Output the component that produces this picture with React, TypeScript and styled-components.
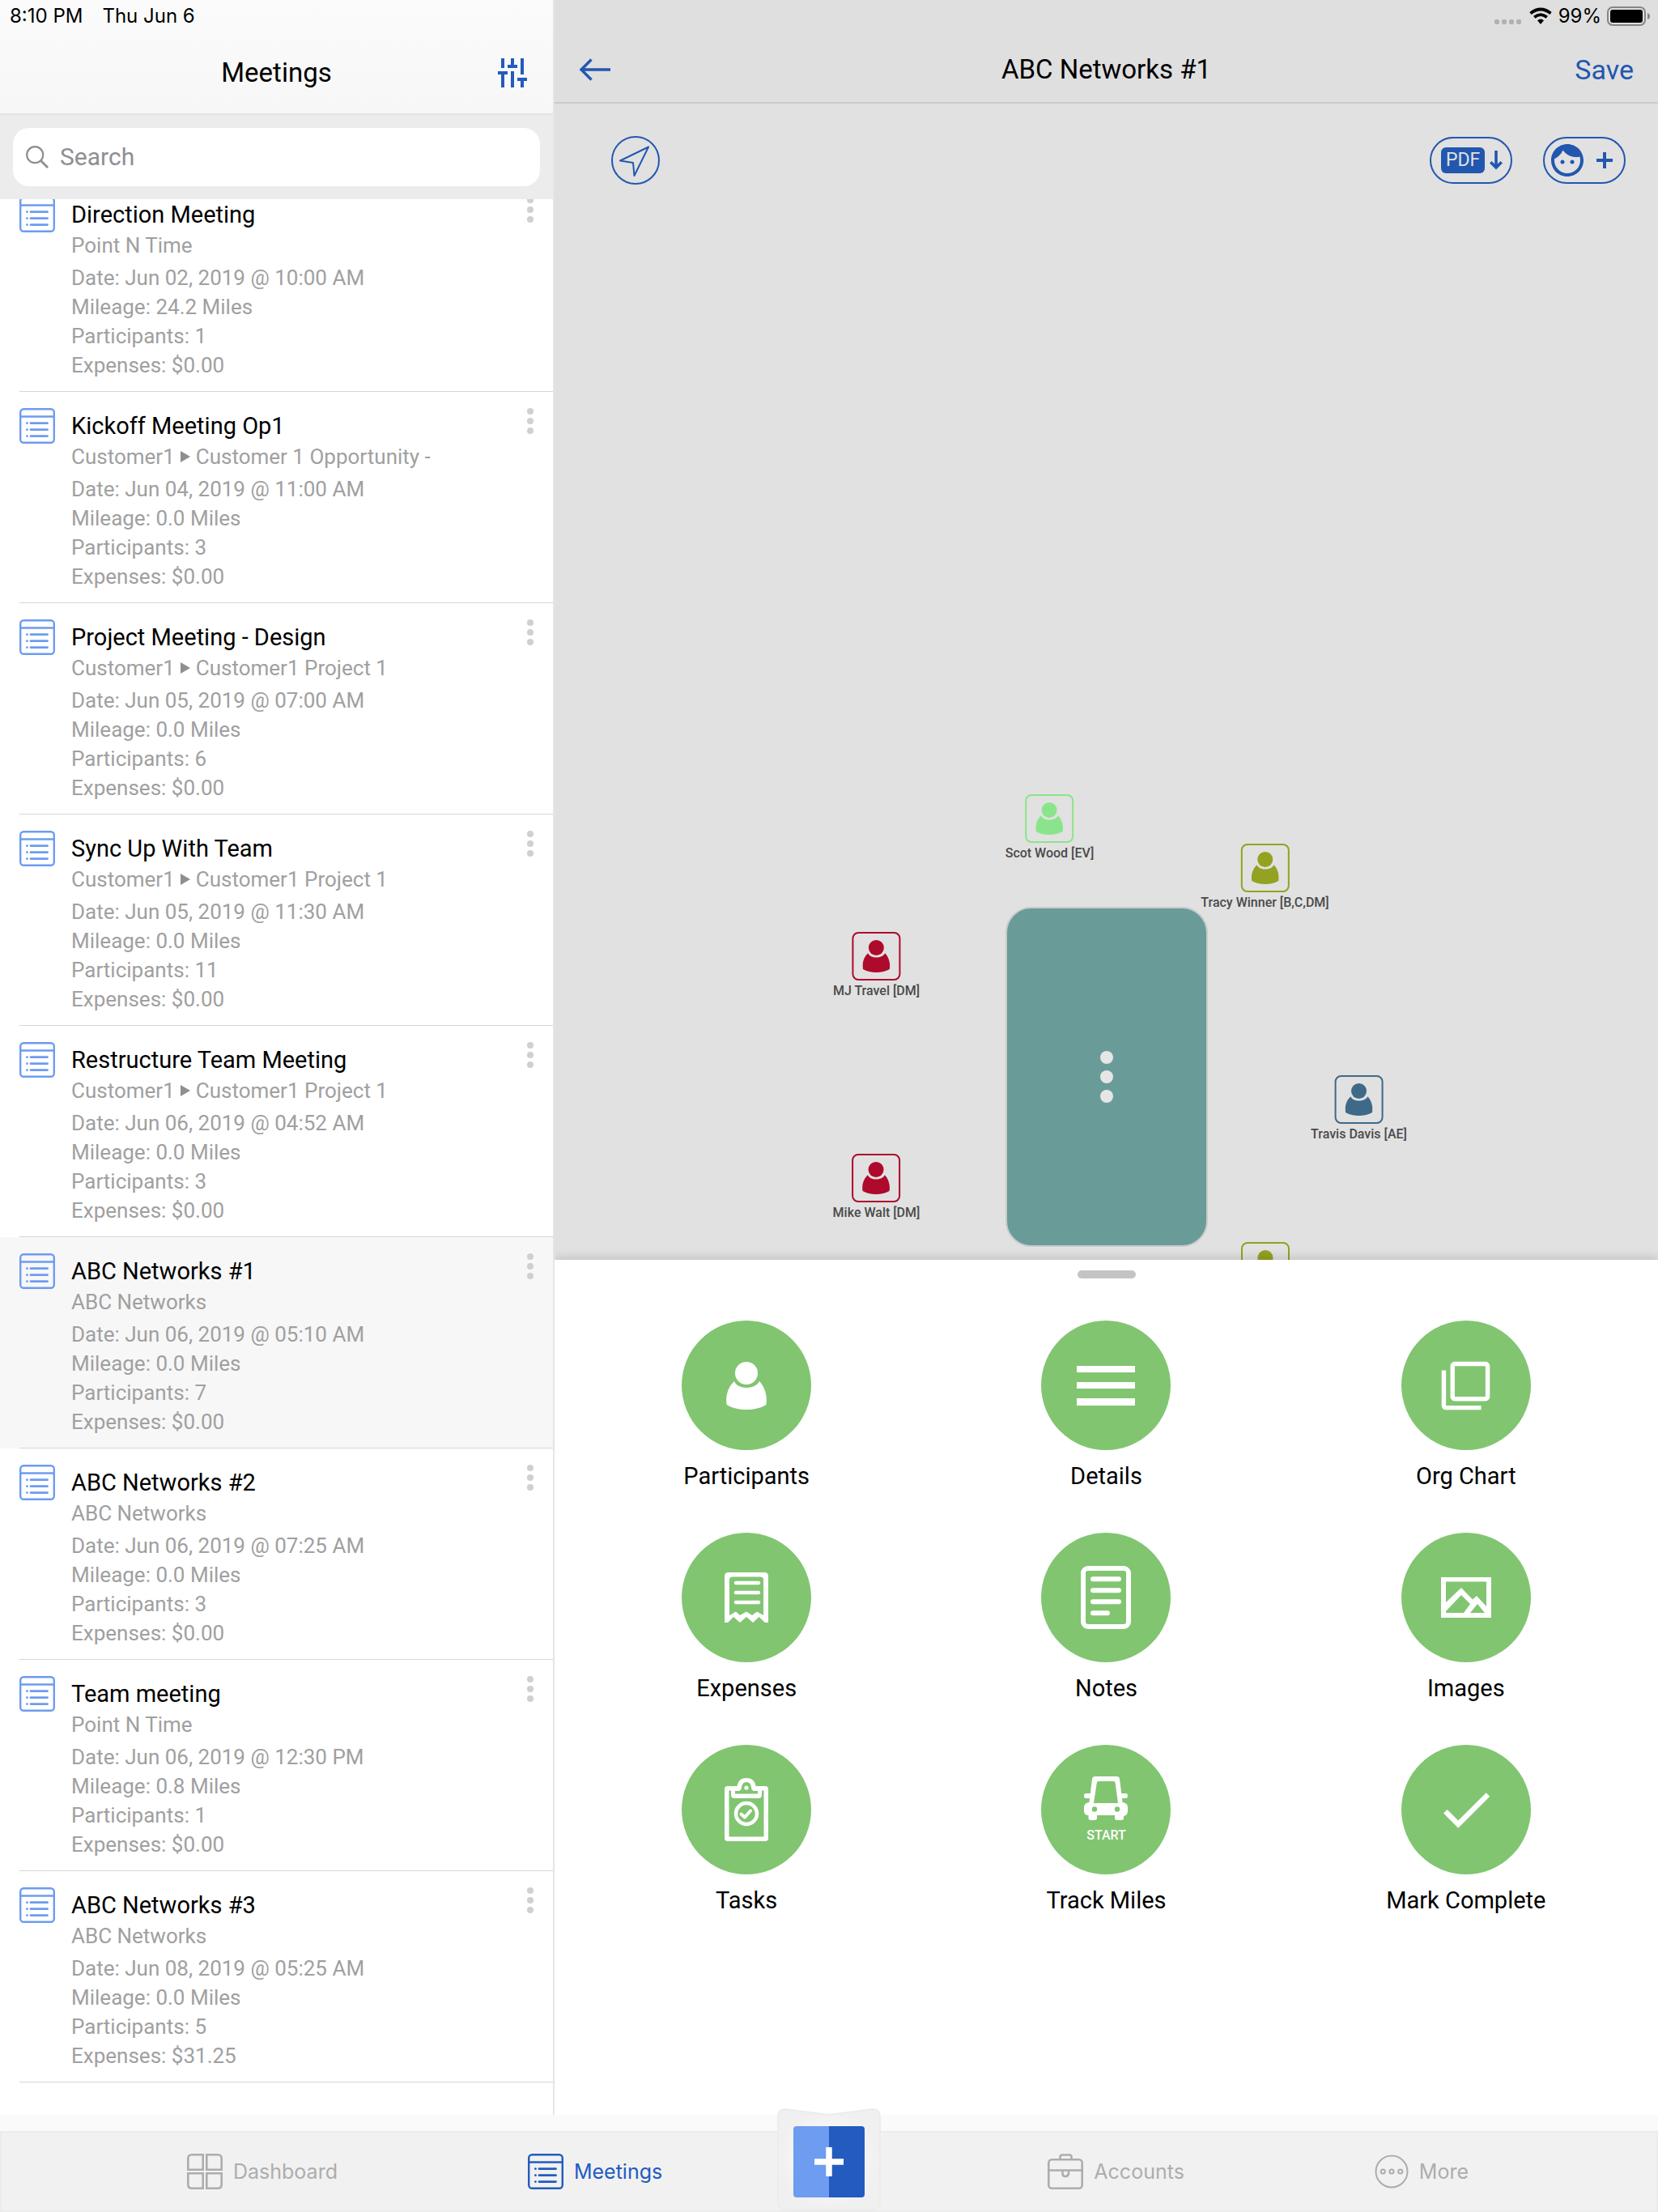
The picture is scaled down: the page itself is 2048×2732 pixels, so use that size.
import React, { useLayoutEffect, useRef } from 'react';
import styled, { createGlobalStyle } from 'styled-components';
import { MdCheck, MdFace, MdFilterNone } from 'react-icons/md';

const color = {
  blue: '#2257b0',
  brand: '#235bbf',
  sky: '#6d9cf0',
  green: '#81c571',
  muted: '#a0a0a0',
  tab: '#adadad',
  canvas: '#e1e1e1',
};

const GlobalStyle = createGlobalStyle`
  *, *::before, *::after { box-sizing: border-box; }
  body { margin: 0; font-family: Roboto, "Liberation Sans", sans-serif; color: #000; background: #fff; }
  button { border: 0; padding: 0; background: none; font: inherit; color: inherit; cursor: pointer; }
  h1, h2, h3, p, ul { margin: 0; padding: 0; font-weight: 400; }
  ul { list-style: none; }
  svg { display: block; flex: none; }
`;

const App = styled.div`
  display: flex;
  flex-direction: column;
  height: 100vh;
`;

const Panes = styled.div`
  flex: 1;
  min-height: 0;
  display: grid;
  grid-template-columns: minmax(0, 685fr) minmax(0, 1363fr);
  grid-template-rows: minmax(0, 1fr);
`;

const ListPane = styled.aside`
  display: flex;
  flex-direction: column;
  border-right: 2px solid #e5e5e5;
`;

const DetailPane = styled.main`
  display: flex;
  flex-direction: column;
  overflow: hidden;
  background: ${color.canvas};
`;

const ListHeader = styled.header`
  background: linear-gradient(#fbfbfb, #f7f7f7);
  border-bottom: 2px solid #e4e4e4;
`;

const DetailHeader = styled.header`
  background: #dfdfdf;
  border-bottom: 2px solid #cbcbcb;
`;

const StatusBar = styled.div<{ $end?: boolean }>`
  display: flex;
  align-items: center;
  justify-content: ${p => (p.$end ? 'flex-end' : 'flex-start')};
  gap: ${p => (p.$end ? 7 : 24)}px;
  height: 40px;
  padding: 0 10px 0 12px;
  font: 400 24px/28px Inter, Roboto, sans-serif;
`;

const TitleRow = styled.div<{ $height: number; $side: number; $top?: number }>`
  display: grid;
  grid-template-columns: 1fr auto 1fr;
  align-items: center;
  height: ${p => p.$height}px;
  padding: ${p => p.$top || 0}px ${p => p.$side}px 0;
  > :last-child { justify-self: end; }
`;

const Title = styled.h1`
  grid-column: 2;
  font-size: 33px;
  line-height: 40px;
`;

const BarButton = styled.button`
  justify-self: start;
  color: ${color.blue};
  font-size: 34px;
  line-height: 40px;
`;

const SearchBar = styled.div`
  padding: 16px;
  background: #ececec;
`;

const SearchField = styled.label`
  display: flex;
  align-items: center;
  gap: 14px;
  height: 72px;
  padding: 0 16px;
  border-radius: 20px;
  background: #fff;
  color: #8e8e93;
`;

const SearchInput = styled.input`
  flex: 1;
  min-width: 0;
  border: 0;
  outline: 0;
  padding: 0;
  background: none;
  font: 400 30px/36px Roboto, sans-serif;
  &::placeholder { color: #8e8e93; opacity: 1; }
`;

const MeetingList = styled.ul`
  flex: 1;
  min-height: 0;
  overflow-y: auto;
  scrollbar-width: none;
  padding-bottom: 64px;
`;

const MeetingRow = styled.li<{ $selected?: boolean }>`
  padding-left: 24px;
  background: ${p => (p.$selected ? '#f7f7f7' : '#fff')};
`;

const RowBody = styled.article`
  display: flex;
  align-items: flex-start;
  gap: 20px;
  padding: 20px 24px 14px 0;
  border-bottom: 1px solid #d6d6d6;
  color: ${color.sky};
`;

const RowText = styled.div`
  flex: 1;
  min-width: 0;
  color: ${color.muted};
  font-size: 26px;
  line-height: 36px;
`;

const RowTitle = styled.h2`
  padding-top: 2px;
  color: #000;
  font-size: 29px;
  line-height: 40px;
`;

const RowPath = styled.p`
  display: flex;
  align-items: center;
  gap: 7px;
  margin-bottom: 4px;
`;

const Arrow = styled.span`
  border-left: 12px solid #8f8f8f;
  border-top: 7px solid transparent;
  border-bottom: 7px solid transparent;
`;

const Dots = styled.button<{ $size: number; $gap: number; $color: string }>`
  display: flex;
  flex-direction: column;
  gap: ${p => p.$gap}px;
  color: ${p => p.$color};
  span {
    width: ${p => p.$size}px;
    height: ${p => p.$size}px;
    border-radius: 50%;
    background: currentColor;
  }
`;

const Canvas = styled.section`
  position: relative;
  flex: 1;
  min-height: 0;
  overflow: hidden;
`;

const CanvasTools = styled.div`
  display: flex;
  align-items: center;
  gap: 38px;
  padding: 40px 40px 0 70px;
  color: ${color.blue};
`;

const RoundButton = styled.button`
  display: grid;
  place-items: center;
  width: 60px;
  height: 60px;
  margin-right: auto;
  border: 2px solid;
  border-radius: 50%;
`;

const PillButton = styled.button`
  display: flex;
  align-items: center;
  justify-content: space-between;
  width: 102px;
  height: 58px;
  padding: 0 10px 0 12px;
  border: 2px solid;
  border-radius: 30px;
`;

const FacePill = styled(PillButton)`
  padding: 0 14px 0 4px;
`;

const PdfBadge = styled.span`
  padding: 0 6px;
  border-radius: 6px;
  background: ${color.blue};
  color: ${color.canvas};
  font-size: 23px;
  line-height: 32px;
`;

const Table = styled.div`
  position: absolute;
  left: 50%;
  top: 992px;
  display: grid;
  place-items: center;
  width: 250px;
  height: 420px;
  transform: translateX(-50%);
  border: 2px solid #c9cbcb;
  border-radius: 32px;
  background: #699c99;
`;

const Seat = styled.button<{ $x: number; $y: number; $color: string }>`
  position: absolute;
  left: calc(50% + ${p => p.$x}px);
  top: ${p => p.$y}px;
  display: flex;
  flex-direction: column;
  align-items: center;
  gap: 3px;
  transform: translateX(-50%);
  color: ${p => p.$color};
  white-space: nowrap;
`;

const SeatFrame = styled.span`
  display: grid;
  place-items: center;
  width: 60px;
  height: 60px;
  border: 2px solid;
  border-radius: 8px;
`;

const SeatName = styled.span`
  color: #4a4a4a;
  font-size: 16px;
  font-weight: 500;
  line-height: 20px;
`;

const Sheet = styled.section`
  position: relative;
  padding: 13px 15px 247px;
  background: #fff;
  box-shadow: 0 -2px 12px rgba(0, 0, 0, 0.16);
`;

const Handle = styled.div`
  width: 72px;
  height: 10px;
  margin: 0 auto 52px;
  border-radius: 5px;
  background: #c3c5c4;
`;

const Actions = styled.div`
  display: grid;
  grid-template-columns: repeat(3, 1fr);
  row-gap: 52px;
`;

const Action = styled.button`
  display: flex;
  flex-direction: column;
  align-items: center;
  gap: 14px;
  font-size: 29px;
  line-height: 36px;
`;

const ActionDisc = styled.span`
  display: flex;
  flex-direction: column;
  align-items: center;
  justify-content: center;
  gap: 9px;
  width: 160px;
  height: 160px;
  border-radius: 50%;
  background: ${color.green};
  color: #fff;
`;

const DiscCaption = styled.span`
  font-size: 16px;
  font-weight: 500;
  line-height: 20px;
`;

const Footer = styled.footer`
  position: relative;
  padding-top: 20px;
  background: #fafafa;
`;

const TabBar = styled.nav`
  display: grid;
  grid-template-columns: minmax(0, 1fr) 128px minmax(0, 1fr);
  height: 100px;
  border: 2px solid #ececec;
  background: #f1f1f1;
`;

const TabGroup = styled.div<{ $end?: boolean }>`
  display: flex;
  align-items: center;
  justify-content: ${p => (p.$end ? 'flex-end' : 'flex-start')};
  gap: 235px;
  padding: ${p => (p.$end ? '0 232px 0 0' : '0 0 0 229px')};
`;

const Tab = styled.button<{ $active?: boolean }>`
  display: flex;
  align-items: center;
  gap: 13px;
  color: ${p => (p.$active ? color.brand : color.tab)};
  font: 400 25px/32px Inter, Roboto, sans-serif;
`;

const AddButton = styled.button`
  margin-top: -30px;
  align-self: start;
`;

const MeetingIcon = () => (
  <svg width="44" height="44" viewBox="0 0 44 44" fill="none" stroke="currentColor" strokeWidth="2.4" aria-hidden>
    <rect x="1.2" y="1.2" width="41.6" height="41.6" rx="4" />
    <path d="M1 10.5H43" />
    <path d="M14 18.7H34.5M14 26.7H34.5M14 34.6H34.5M9.4 18.7h.1M9.4 26.7h.1M9.4 34.6h.1" strokeLinecap="round" strokeWidth="2.8" />
  </svg>
);

const FilterIcon = () => (
  <svg width="36" height="36" viewBox="0 0 36 36" fill={color.brand} aria-hidden>
    <path d="M4 0h4v12H4zM0 16h12v4H8v16H4V20H0zM16 0h4v8h4v4H12V8h4zM16 16h4v20h-4zM28 0h4v20h-4zM24 24h12v4h-4v8h-4v-8h-4z" />
  </svg>
);

const SearchIcon = () => (
  <svg width="28" height="28" viewBox="0 0 28 28" fill="none" stroke="currentColor" strokeWidth="2.2" aria-hidden>
    <circle cx="11.2" cy="11.2" r="10" />
    <path d="M18.5 18.5L27 27" strokeWidth="2.8" />
  </svg>
);

const BackIcon = () => (
  <svg width="40" height="28" viewBox="0 0 40 28" fill="none" stroke="currentColor" strokeWidth="3.4" aria-hidden>
    <path d="M39 14H3M15.5 1.5L3 14L15.5 26.5" />
  </svg>
);

const LocateIcon = () => (
  <svg width="40" height="40" viewBox="0 0 40 40" fill="none" stroke="currentColor" strokeWidth="2" strokeLinejoin="round" aria-hidden>
    <path d="M36 3.5L1 20.500L17 23L18.500 39Z" />
  </svg>
);

const DownIcon = () => (
  <svg width="16" height="24" viewBox="0 0 16 24" fill="none" stroke="currentColor" strokeWidth="3.6" aria-hidden>
    <path d="M8 0V21M1.3 14.2L8 21L14.7 14.2" />
  </svg>
);

const PlusIcon = () => (
  <svg width="20" height="20" viewBox="0 0 20 20" fill="none" stroke="currentColor" strokeWidth="4" aria-hidden>
    <path d="M10 0V20M0 10H20" />
  </svg>
);

const PersonIcon = ({ height }: { height: number }) => (
  <svg height={height} viewBox="0 0 50 59" fill="currentColor" aria-hidden>
    <circle cx="25" cy="14" r="14" />
    <path d="M10 24C14 34.5 36 34.5 41 24C47 30 51.5 42 49.3 53C36 61 14 61 .7 53C-1.5 42 3 30 10 24Z" />
  </svg>
);

const LinesIcon = () => (
  <svg width="72" height="49" viewBox="0 0 72 49" fill="currentColor" aria-hidden>
    <path d="M0 0h72v8H0zM0 20h72v8H0zM0 40h72v9H0z" />
  </svg>
);

const ReceiptIcon = () => (
  <svg width="54" height="62" viewBox="0 0 54 62" fill="currentColor" fillRule="evenodd" aria-hidden>
    <path d="M0 62V5Q0 0 5 0H49Q54 0 54 5V62H50L42.5 55L35 62L27 55L19 62L11 55L4 62ZM6 53V9Q6 5.500 10 5.500H44Q48 5.500 48 9V53L40 48.500L34 53L27 48.500L19 53L14 48.500Z" />
    <path d="M14 13H42M14 25H42M14 37H42" stroke="currentColor" strokeWidth="4.500" strokeLinecap="round" />
  </svg>
);

const NotesIcon = () => (
  <svg width="62" height="78" viewBox="0 0 62 78" fill="none" stroke="currentColor" strokeWidth="6" aria-hidden>
    <rect x="3" y="3" width="56" height="72" rx="6" />
    <path d="M15 16.300H47M15 30.300H47M15 44.300H47M15 58.300H33" strokeLinecap="round" />
  </svg>
);

const ImageIcon = () => (
  <svg width="62" height="50" viewBox="0 0 62 50" fill="currentColor" fillRule="evenodd" aria-hidden>
    <path d="M0 0H62V50H0ZM6 5.500V31L25 13L39 27.500L44 23L56 36V5.500ZM6 42V44H28L36 33L25 22ZM36 44H54L45 33Z" />
  </svg>
);

const TaskIcon = () => (
  <svg width="54" height="78" viewBox="0 0 54 78" fill="none" stroke="currentColor" aria-hidden>
    <rect x="2.750" y="12.750" width="48.500" height="62.500" rx="1" strokeWidth="5.500" />
    <path d="M8 13H15Q16 0 27 0T39 13H46V21Q46 25 42 25H12Q8 25 8 21Z" fill="currentColor" stroke="none" />
    <path d="M13 16H18Q21 15 21 11Q22 5 27 5T33 11Q33 15 36 16H41V19.500H13Z" fill={color.green} stroke="none" />
    <circle cx="27" cy="12" r="2.600" fill="currentColor" stroke="none" />
    <circle cx="27" cy="44" r="13" strokeWidth="4.500" />
    <path d="M20.500 44.500L25 48.500L32 40.500" strokeWidth="4" strokeLinecap="round" strokeLinejoin="round" />
  </svg>
);

const CarIcon = () => (
  <svg width="54" height="54" viewBox="0 0 54 54" fill="currentColor" fillRule="evenodd" aria-hidden>
    <path d="M14 0H40Q43.500 0 44 3L46.200 21H51.500Q54 21 54 24T51.500 27H47L47.500 32Q54 33 54 38V43Q54 48 49 49V51.500Q49 54 46 54H41Q38 54 38 51.500V48H16V51.500Q16 54 13 54H8Q5.500 54 5.500 51.500V48Q0 48 0 43V38Q0 33 6.500 32L7 27H2.500Q0 27 0 24T2.500 21H7.800L10 3Q10.500 0 14 0ZM18 6Q16 6 15.800 8L12 33H42L38.600 8Q38.400 6 36.500 6ZM13 37.300A3.200 3.200 0 1 0 13 43.700A3.200 3.200 0 1 0 13 37.300ZM41 37.300A3.200 3.200 0 1 0 41 43.700A3.200 3.200 0 1 0 41 37.300Z" />
  </svg>
);

const DashboardIcon = () => (
  <svg width="44" height="44" viewBox="0 0 44 44" fill="none" stroke="currentColor" strokeWidth="2.600" aria-hidden>
    <path d="M19.700 1.300V19.700H1.300V6Q1.300 1.300 6 1.300ZM24.300 1.300V19.700H42.700V6Q42.700 1.300 38 1.300ZM19.700 42.700V24.300H1.300V38Q1.300 42.700 6 42.700ZM24.300 42.700V24.300H42.700V38Q42.700 42.700 38 42.700Z" />
  </svg>
);

const BriefcaseIcon = () => (
  <svg width="44" height="44" viewBox="0 0 44 44" fill="none" stroke="currentColor" strokeWidth="2.600" aria-hidden>
    <rect x="1.300" y="7.300" width="41.400" height="35.400" rx="4" />
    <path d="M15.500 7V4Q15.500 1.500 18 1.500H27Q29.500 1.500 29.500 4V7M1 20.500H43M18.500 21V24.500Q18.500 28 22 28T26 24.500V21" />
  </svg>
);

const MoreIcon = () => (
  <svg width="42" height="42" viewBox="0 0 42 42" fill="none" stroke="currentColor" strokeWidth="2" aria-hidden>
    <circle cx="21" cy="21" r="19.500" />
    <circle cx="10.300" cy="21" r="2.600" />
    <circle cx="21" cy="21" r="2.600" />
    <circle cx="31.700" cy="21" r="2.600" />
  </svg>
);

const AddIcon = () => (
  <svg width="128" height="126" viewBox="0 0 128 126" aria-hidden>
    <defs>
      <radialGradient id="plate">
        <stop offset="0.600" stopColor="#f6f6f6" />
        <stop offset="1" stopColor="#f0f0f0" />
      </radialGradient>
    </defs>
    <path d="M1 11Q1 1 10 1L64 8L118 1Q127 1 127 11V115Q127 125 117 125H11Q1 125 1 115Z" fill="url(#plate)" stroke="#ececec" strokeWidth="2" />
    <path d="M64 22V110H24Q20 110 20 106V26Q20 22 24 22Z" fill={color.sky} />
    <path d="M64 22V110H104Q108 110 108 106V26Q108 22 104 22Z" fill={color.brand} />
    <path d="M64 48V84M46 66H82" stroke="#fff" strokeWidth="7.500" />
  </svg>
);

const SignalIcons = () => (
  <svg width="72" height="24" viewBox="0 0 72 24" aria-label="No cellular signal, Wi-Fi connected" role="img">
    <g fill="#b1b1b1">
      <rect x="0" y="16" width="6" height="6" rx="2" />
      <rect x="9" y="16" width="6" height="6" rx="2" />
      <rect x="18" y="16" width="6" height="6" rx="2" />
      <rect x="27" y="16" width="6" height="6" rx="2" />
    </g>
    <g fill="none" stroke="#000" strokeWidth="3.800">
      <path d="M44.500 8.500Q57 -1.500 69.500 8.500" />
      <path d="M49.200 13.300Q57 7 64.800 13.300" />
    </g>
    <path d="M53 17.200Q57 14 61 17.200L57 22Z" />
  </svg>
);

const BatteryIcon = () => (
  <svg width="53" height="24" viewBox="0 0 53 24" aria-label="Battery" role="img">
    <rect x="1" y="1" width="46" height="22" rx="6" fill="none" stroke="#858585" strokeWidth="2" />
    <rect x="4" y="4" width="40" height="16" rx="3" />
    <path d="M50 8Q53 9 53 12T50 16Z" fill="#858585" />
  </svg>
);

type Meeting = {
  title: string;
  path: string[];
  date: string;
  miles: string;
  people: number;
  cost: string;
  selected?: boolean;
};

const meetings: Meeting[] = [
  { title: 'Direction Meeting', path: ['Point N Time'], date: 'Jun 02, 2019 @ 10:00 AM', miles: '24.2', people: 1, cost: '$0.00' },
  { title: 'Kickoff Meeting Op1', path: ['Customer1', 'Customer 1 Opportunity -'], date: 'Jun 04, 2019 @ 11:00 AM', miles: '0.0', people: 3, cost: '$0.00' },
  { title: 'Project Meeting - Design', path: ['Customer1', 'Customer1 Project 1'], date: 'Jun 05, 2019 @ 07:00 AM', miles: '0.0', people: 6, cost: '$0.00' },
  { title: 'Sync Up With Team', path: ['Customer1', 'Customer1 Project 1'], date: 'Jun 05, 2019 @ 11:30 AM', miles: '0.0', people: 11, cost: '$0.00' },
  { title: 'Restructure Team Meeting', path: ['Customer1', 'Customer1 Project 1'], date: 'Jun 06, 2019 @ 04:52 AM', miles: '0.0', people: 3, cost: '$0.00' },
  { title: 'ABC Networks #1', path: ['ABC Networks'], date: 'Jun 06, 2019 @ 05:10 AM', miles: '0.0', people: 7, cost: '$0.00', selected: true },
  { title: 'ABC Networks #2', path: ['ABC Networks'], date: 'Jun 06, 2019 @ 07:25 AM', miles: '0.0', people: 3, cost: '$0.00' },
  { title: 'Team meeting', path: ['Point N Time'], date: 'Jun 06, 2019 @ 12:30 PM', miles: '0.8', people: 1, cost: '$0.00' },
  { title: 'ABC Networks #3', path: ['ABC Networks'], date: 'Jun 08, 2019 @ 05:25 AM', miles: '0.0', people: 5, cost: '$31.25' },
];

const seats = [
  { name: 'Scot Wood [EV]', x: -70, y: 853, color: '#8be48b' },
  { name: 'Tracy Winner [B,C,DM]', x: 196, y: 914, color: '#93a220' },
  { name: 'MJ Travel [DM]', x: -284, y: 1023, color: '#ae0a2b' },
  { name: 'Travis Davis [AE]', x: 312, y: 1200, color: '#3f6989' },
  { name: 'Mike Walt [DM]', x: -284, y: 1297, color: '#ae0a2b' },
  { name: '', x: 196, y: 1406, color: '#93a220' },
];

const actions = [
  { label: 'Participants', icon: <PersonIcon height={59} /> },
  { label: 'Details', icon: <LinesIcon /> },
  { label: 'Org Chart', icon: <MdFilterNone size={65} /> },
  { label: 'Expenses', icon: <ReceiptIcon /> },
  { label: 'Notes', icon: <NotesIcon /> },
  { label: 'Images', icon: <ImageIcon /> },
  { label: 'Tasks', icon: <TaskIcon /> },
  { label: 'Track Miles', icon: <CarIcon />, caption: 'START' },
  { label: 'Mark Complete', icon: <MdCheck size={78} /> },
];

const ThreeDots = () => (
  <>
    <span />
    <span />
    <span />
  </>
);

export default function MeetingsApp() {
  const list = useRef<HTMLUListElement>(null);

  useLayoutEffect(() => {
    if (list.current) list.current.scrollTop = 23;
  }, []);

  return (
    <App>
      <GlobalStyle />
      <Panes>
        <ListPane>
          <ListHeader>
            <StatusBar>
              <span>8:10 PM</span>
              <span>Thu Jun 6</span>
            </StatusBar>
            <TitleRow $height={100} $side={32}>
              <Title>Meetings</Title>
              <BarButton aria-label="Filter"><FilterIcon /></BarButton>
            </TitleRow>
          </ListHeader>
          <SearchBar>
            <SearchField>
              <SearchIcon />
              <SearchInput type="text" placeholder="Search" aria-label="Search" />
            </SearchField>
          </SearchBar>
          <MeetingList ref={list}>
            {meetings.map(m => (
              <MeetingRow key={m.title} $selected={m.selected}>
                <RowBody>
                  <MeetingIcon />
                  <RowText>
                    <RowTitle>{m.title}</RowTitle>
                    <RowPath>
                      {m.path.map((part, i) => (
                        <React.Fragment key={part}>
                          {i > 0 && <Arrow />}
                          <span>{part}</span>
                        </React.Fragment>
                      ))}
                    </RowPath>
                    <p>Date: {m.date}</p>
                    <p>Mileage: {m.miles} Miles</p>
                    <p>Participants: {m.people}</p>
                    <p>Expenses: {m.cost}</p>
                  </RowText>
                  <Dots $size={8} $gap={4} $color="#d0d0d0" aria-label={`Options for ${m.title}`}>
                    <ThreeDots />
                  </Dots>
                </RowBody>
              </MeetingRow>
            ))}
          </MeetingList>
        </ListPane>

        <DetailPane>
          <DetailHeader>
            <StatusBar $end>
              <SignalIcons />
              <span>99%</span>
              <BatteryIcon />
            </StatusBar>
            <TitleRow $height={86} $side={30} $top={5}>
              <BarButton aria-label="Back"><BackIcon /></BarButton>
              <Title as="h2">ABC Networks #1</Title>
              <BarButton>Save</BarButton>
            </TitleRow>
          </DetailHeader>
          <Canvas>
            <CanvasTools>
              <RoundButton aria-label="Locate"><LocateIcon /></RoundButton>
              <PillButton aria-label="Download PDF">
                <PdfBadge>PDF</PdfBadge>
                <DownIcon />
              </PillButton>
              <FacePill aria-label="Add participant">
                <MdFace size={48} />
                <PlusIcon />
              </FacePill>
            </CanvasTools>
            <Table>
              <Dots $size={16} $gap={8} $color="#e6e6e6" aria-label="Table options">
                <ThreeDots />
              </Dots>
            </Table>
            {seats.map(s => (
              <Seat key={`${s.x},${s.y}`} $x={s.x} $y={s.y} $color={s.color} aria-label={s.name || 'Participant'}>
                <SeatFrame><PersonIcon height={40} /></SeatFrame>
                <SeatName>{s.name}</SeatName>
              </Seat>
            ))}
          </Canvas>
          <Sheet>
            <Handle />
            <Actions>
              {actions.map(a => (
                <Action key={a.label}>
                  <ActionDisc>
                    {a.icon}
                    {a.caption && <DiscCaption>{a.caption}</DiscCaption>}
                  </ActionDisc>
                  <span>{a.label}</span>
                </Action>
              ))}
            </Actions>
          </Sheet>
        </DetailPane>
      </Panes>

      <Footer>
        <TabBar>
          <TabGroup>
            <Tab><DashboardIcon />Dashboard</Tab>
            <Tab $active aria-current="page"><MeetingIcon />Meetings</Tab>
          </TabGroup>
          <AddButton aria-label="Add"><AddIcon /></AddButton>
          <TabGroup $end>
            <Tab><BriefcaseIcon />Accounts</Tab>
            <Tab><MoreIcon />More</Tab>
          </TabGroup>
        </TabBar>
      </Footer>
    </App>
  );
}
